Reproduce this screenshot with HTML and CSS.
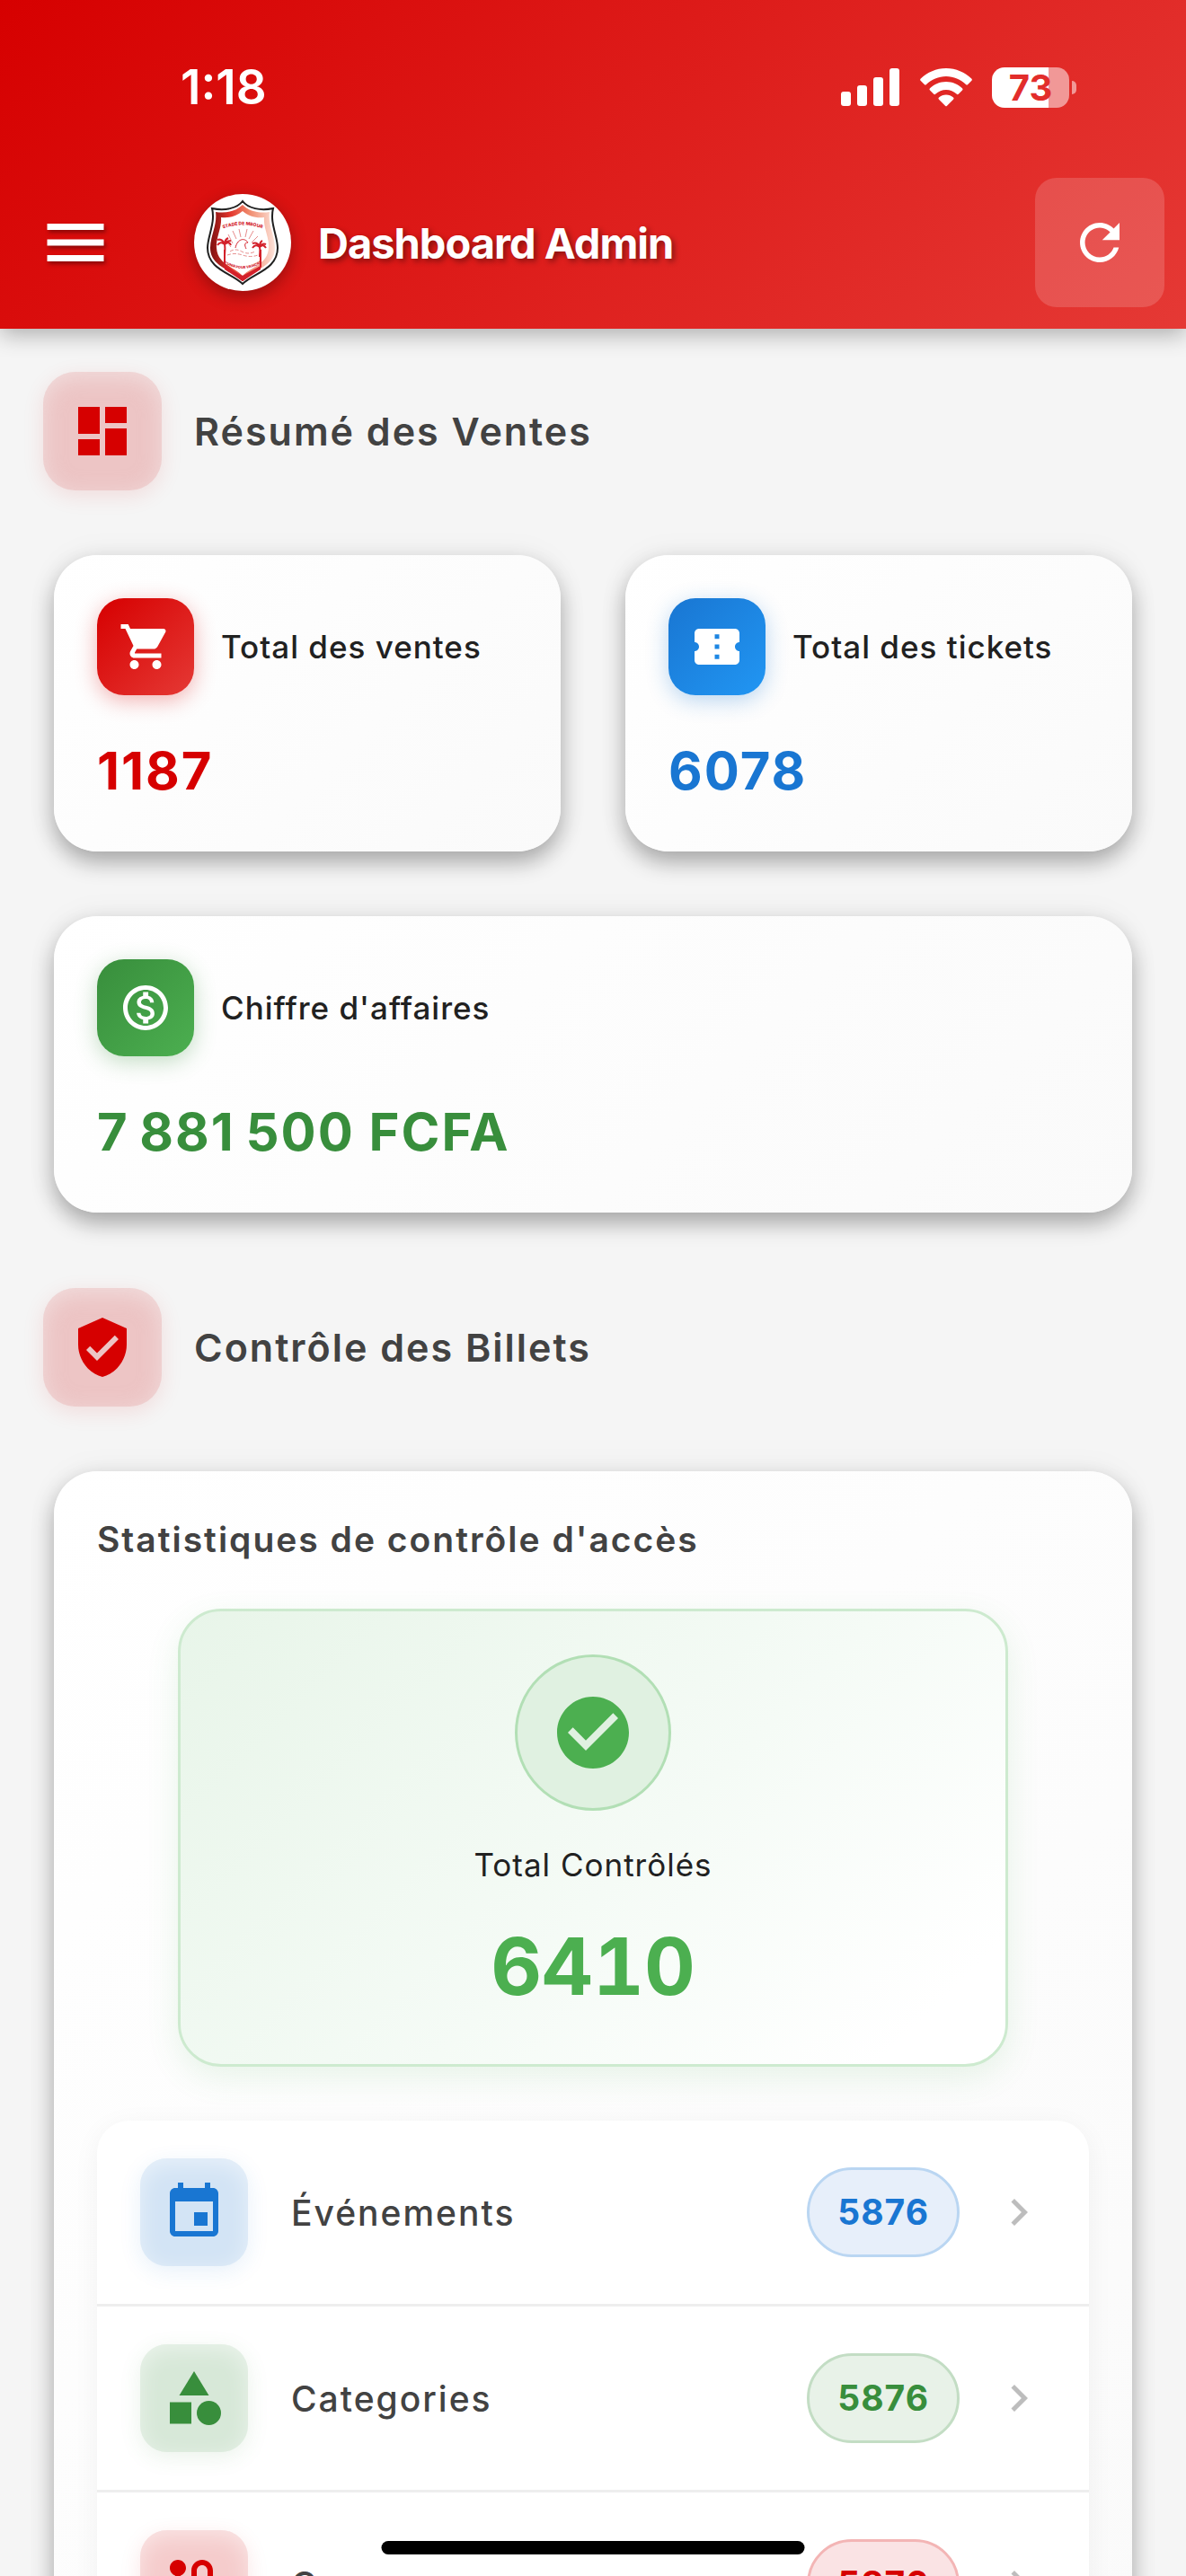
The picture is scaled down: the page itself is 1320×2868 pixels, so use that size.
FILE: index.html
```html
<!DOCTYPE html>
<html lang="fr">
<head>
  <meta charset="UTF-8" />
  <meta name="viewport" content="width=device-width, initial-scale=1.0"/>
  <title>Dashboard Admin</title>
  <link rel="stylesheet" href="styles.css">
</head>
<body>

  <header class="header">
    <!-- Status bar -->
    <div class="status-bar">
      <span class="time">1:18</span>
      <div class="status-icons">
        <svg class="signal" viewBox="0 0 66 42" fill="#fff">
          <rect x="0" y="26" width="11" height="16" rx="3"/>
          <rect x="18" y="19" width="11" height="23" rx="3"/>
          <rect x="36" y="10" width="11" height="32" rx="3"/>
          <rect x="54" y="0" width="11" height="42" rx="3"/>
        </svg>
        <svg class="wifi" viewBox="0 0 58 43" fill="#fff">
          <path d="M29 0C18 0 8 4.500 0.800 11.600q-1.300 1.200 0 2.500l4 4q1 1 2.200 0C12.800 12.500 20.500 9 29 9s16.200 3.500 22 9.100q1.200 1 2.200 0l4-4q1.300-1.300 0-2.500C50 4.500 40 0 29 0z"/>
          <path d="M29 15c-7 0-13.300 2.800-18 7.200q-1.200 1.200 0 2.400l4 4q1.200 1.100 2.400 0C20.500 25.800 24.500 24 29 24s8.500 1.800 11.600 4.600q1.200 1.100 2.400 0l4-4q1.200-1.200 0-2.400C42.300 17.800 36 15 29 15z"/>
          <path d="M29 29.500c-3 0-5.800 1.200-8 3q-1.300 1.100 0 2.300l7 7q1 1 2 0l7-7q1.300-1.200 0-2.300c-2.200-1.800-5-3-8-3z"/>
        </svg>
        <div class="battery"><span>73</span></div>
      </div>
    </div>

    <!-- App bar -->
    <div class="app-bar">
      <button class="menu-btn" aria-label="Menu">
        <svg viewBox="0 0 24 24"><path d="M3 18h18v-2H3v2zm0-5h18v-2H3v2zm0-7v2h18V6H3z"/></svg>
      </button>
      <div class="logo">
        <svg viewBox="0 0 108 108">
          <defs>
            <linearGradient id="crest" x1="0" x2="1" y1="0" y2="0">
              <stop offset="0" stop-color="#7d1010"/>
              <stop offset="0.3" stop-color="#e2332b"/>
              <stop offset="0.6" stop-color="#f08a6c"/>
              <stop offset="1" stop-color="#fde3da"/>
            </linearGradient>
            <path id="arcTop" d="M22 43 Q54 26 86 43"/>
            <path id="arcBottom" d="M26 72 Q54 94 82 72"/>
          </defs>
          <path d="M54 8C48 16 34 19 20 16c4 16-5 31-5 44 0 24 27 28 39 40 12-12 39-16 39-40 0-13-9-28-5-44-14 3-28 0-34-8z" fill="#fff" stroke="#202020" stroke-width="2"/>
          <path d="M54 12C47 19 36 22 24 20c2 14-6 27-6 40 0 21 25 25 36 36 11-11 36-15 36-36 0-13-8-26-6-40-12 2-23-1-30-8z" fill="url(#crest)"/>
          <path d="M54 19c-7 6-15 8-24 7 1 12-6 23-5 34 1 18 19 21 29 31 10-10 28-13 29-31 1-11-6-22-5-34-9 1-17-1-24-7z" fill="#fff"/>
          <path d="M34 62v19l20 15 20-15V62" fill="none" stroke="#d3202a" stroke-width="2"/>
          <path d="M34 80l20 11 20-11v4l-20 13-20-13z" fill="#d3202a"/>
          <g stroke="#d3202a" stroke-width="2" fill="none">
            <path d="M34 70c0-6 1-9 0-14M34 56c-3-3-6-2-8 1M34 56c-2-5-5-6-8-5M34 56c0-4 2-6 4-7M34 56c3-3 6-2 7 1M34 56c2-4 5-4 7-4"/>
            <path d="M73 70c0-5 1-7 0-11M73 59c-3-3-6-2-8 1M73 59c-2-5-5-5-8-4M73 59c0-4 1-6 3-7M73 59c3-3 5-2 7 1M73 59c2-4 5-4 7-3"/>
          </g>
          <g stroke="#e78c8c" stroke-width="1" fill="none">
            <path d="M43 55l-5-10M47 50l-4-9M52 48l-2-9M57 48l2-9M61 50l5-9M64 54l7-7M41 59l-3-4"/>
            <path d="M40 64q6-4 13 0t15 0M37 68q8-3 17 0t17 0" stroke-dasharray="4 2"/>
            <path d="M46 60c2-10 10-12 14-6-4 0-4 3-2 7" stroke="#d3202a"/>
          </g>
          <text class="crest-text"><textPath href="#arcTop" startOffset="50%">STADE DE MBOUR</textPath></text>
          <text class="crest-text crest-motto"><textPath href="#arcBottom" startOffset="50%">S'UNIR POUR VAINCRE</textPath></text>
        </svg>
      </div>
      <h1>Dashboard Admin</h1>
      <button class="refresh-btn" aria-label="Actualiser">
        <svg viewBox="0 0 24 24"><path d="M17.650 6.350C16.200 4.900 14.210 4 12 4c-4.420 0-7.990 3.580-7.990 8s3.570 8 7.990 8c3.730 0 6.840-2.550 7.730-6h-2.080c-.82 2.330-3.040 4-5.650 4-3.310 0-6-2.690-6-6s2.690-6 6-6c1.660 0 3.140.69 4.220 1.780L13 11h7V4l-2.350 2.350z"/></svg>
      </button>
    </div>
  </header>

  <main class="content">
    <!-- Sales summary -->
    <div class="section-title">
      <div class="section-icon">
        <svg viewBox="0 0 24 24"><path d="M3 13h8V3H3v10zm0 8h8v-6H3v6zm10 0h8V11h-8v10zm0-18v6h8V3h-8z"/></svg>
      </div>
      <h2>Résumé des Ventes</h2>
    </div>

    <div class="stats">
      <div class="card stat-card red">
        <div class="stat-head">
          <div class="stat-icon">
            <svg viewBox="0 0 24 24"><path d="M7 18c-1.100 0-1.990.9-1.990 2S5.900 22 7 22s2-.9 2-2-.9-2-2-2zM1 2v2h2l3.600 7.590-1.350 2.450c-.16.28-.25.61-.25.96 0 1.100.9 2 2 2h12v-2H7.420c-.14 0-.25-.11-.25-.25l.03-.12.900-1.630h7.450c.75 0 1.410-.41 1.750-1.030l3.580-6.490c.08-.14.12-.31.12-.48 0-.55-.45-1-1-1H5.210l-.94-2H1zm16 16c-1.100 0-1.990.9-1.990 2s.89 2 1.990 2 2-.9 2-2-.9-2-2-2z"/></svg>
          </div>
          <span>Total des ventes</span>
        </div>
        <strong>1187</strong>
      </div>

      <div class="card stat-card blue">
        <div class="stat-head">
          <div class="stat-icon">
            <svg viewBox="0 0 24 24"><path d="M22 10V6c0-1.110-.9-2-2-2H4c-1.100 0-1.990.89-1.990 2v4c1.100 0 1.990.9 1.990 2s-.89 2-2 2v4c0 1.100.9 2 2 2h16c1.100 0 2-.9 2-2v-4c-1.100 0-2-.9-2-2s.9-2 2-2zm-9 7.500h-2v-2h2v2zm0-4.500h-2v-2h2v2zm0-4.500h-2v-2h2v2z"/></svg>
          </div>
          <span>Total des tickets</span>
        </div>
        <strong>6078</strong>
      </div>

      <div class="card stat-card green wide">
        <div class="stat-head">
          <div class="stat-icon">
            <svg viewBox="0 0 24 24"><path d="M12 2C6.480 2 2 6.480 2 12s4.480 10 10 10 10-4.480 10-10S17.520 2 12 2zm0 18c-4.410 0-8-3.590-8-8s3.590-8 8-8 8 3.590 8 8-3.590 8-8 8zm.31-8.860c-1.770-.45-2.340-.94-2.340-1.670 0-.84.79-1.430 2.100-1.430 1.380 0 1.900.66 1.940 1.640h1.710c-.05-1.340-.87-2.570-2.490-2.970V5H10.900v1.690c-1.510.32-2.720 1.300-2.720 2.810 0 1.790 1.490 2.690 3.660 3.210 1.950.46 2.340 1.150 2.340 1.870 0 .53-.39 1.390-2.100 1.390-1.600 0-2.230-.72-2.320-1.640H8.040c.1 1.700 1.360 2.660 2.860 2.970V19h2.340v-1.670c1.520-.29 2.720-1.160 2.730-2.770-.01-2.200-1.900-2.960-3.660-3.420z"/></svg>
          </div>
          <span>Chiffre d'affaires</span>
        </div>
        <strong>7&#8198;881&#8198;500 FCFA</strong>
      </div>
    </div>

    <!-- Ticket control -->
    <div class="section-title">
      <div class="section-icon">
        <svg viewBox="0 0 24 24"><path d="M12 1L3 5v6c0 5.550 3.840 10.740 9 12 5.160-1.260 9-6.450 9-12V5l-9-4zm-2 16l-4-4 1.410-1.410L10 14.170l6.590-6.590L18 9l-8 8z"/></svg>
      </div>
      <h2>Contrôle des Billets</h2>
    </div>

    <div class="card panel">
      <h3>Statistiques de contrôle d'accès</h3>

      <div class="total">
        <div class="total-icon">
          <svg viewBox="0 0 24 24"><path d="M12 2C6.480 2 2 6.480 2 12s4.480 10 10 10 10-4.480 10-10S17.520 2 12 2zm-2 15l-5-5 1.410-1.410L10 14.170l7.590-7.590L19 8l-9 9z"/></svg>
        </div>
        <span>Total Contrôlés</span>
        <strong>6410</strong>
      </div>

      <nav class="list">
        <a href="#evenements" class="row blue">
          <div class="row-icon">
            <svg viewBox="0 0 24 24"><path d="M17 12h-5v5h5v-5zM16 1v2H8V1H6v2H5c-1.110 0-1.990.9-1.990 2L3 19c0 1.100.89 2 2 2h14c1.100 0 2-.9 2-2V5c0-1.100-.9-2-2-2h-1V1h-2zm3 18H5V8h14v11z"/></svg>
          </div>
          <span class="row-label">Événements</span>
          <span class="badge">5876</span>
          <svg class="chevron" viewBox="0 0 24 24"><path d="M10 6L8.590 7.410 13.170 12l-4.580 4.590L10 18l6-6z"/></svg>
        </a>
        <a href="#categories" class="row green">
          <div class="row-icon">
            <svg viewBox="0 0 24 24"><path d="M12 2l-5.500 9h11z"/><circle cx="17.500" cy="17.500" r="4.500"/><path d="M3 13.500h8v8H3z"/></svg>
          </div>
          <span class="row-label">Categories</span>
          <span class="badge">5876</span>
          <svg class="chevron" viewBox="0 0 24 24"><path d="M10 6L8.590 7.410 13.170 12l-4.580 4.590L10 18l6-6z"/></svg>
        </a>
        <a href="#courses" class="row red">
          <div class="row-icon">
            <svg viewBox="0 0 24 24"><path d="M19 15.180V7c0-2.210-1.790-4-4-4s-4 1.790-4 4v10c0 1.100-.9 2-2 2s-2-.9-2-2V8.820C8.160 8.400 9 7.300 9 6c0-1.660-1.340-3-3-3S3 4.340 3 6c0 1.300.84 2.400 2 2.820V17c0 2.210 1.790 4 4 4s4-1.790 4-4V7c0-1.100.9-2 2-2s2 .9 2 2v8.180c-1.160.41-2 1.510-2 2.820 0 1.660 1.340 3 3 3s3-1.340 3-3c0-1.300-.84-2.400-2-2.820z"/></svg>
          </div>
          <span class="row-label">Courses</span>
          <span class="badge">5876</span>
          <svg class="chevron" viewBox="0 0 24 24"><path d="M10 6L8.590 7.410 13.170 12l-4.580 4.590L10 18l6-6z"/></svg>
        </a>
      </nav>
    </div>
  </main>

  <div class="home-indicator"></div>

</body>
</html>
```
FILE: styles.css
```css
:root {
  --red: #d60000;
  --red-light: #e53935;
  --blue: #1976d2;
  --blue-light: #2196f3;
  --green: #388e3c;
  --green-light: #4caf50;
  --background: #f5f5f5;
  --text: #424242;
}

* {
  box-sizing: border-box;
}

body {
  margin: 0;
  height: 100vh;
  overflow: hidden;
  font-family: Inter, "Liberation Sans", sans-serif;
  background-color: var(--background);
  color: var(--text);
}

h1, h2, h3 {
  margin: 0;
}

svg {
  display: block;
  fill: currentColor;
}

button {
  display: flex;
  align-items: center;
  justify-content: center;
  padding: 0;
  border: none;
  background: none;
  color: #fff;
  cursor: pointer;
}

/* Header */
.header {
  position: relative;
  background: linear-gradient(135deg, var(--red), var(--red-light));
  color: #fff;
  padding-bottom: 12px;
  box-shadow: 0 6px 24px rgba(0, 0, 0, 0.3);
}

.status-bar {
  display: flex;
  align-items: center;
  justify-content: space-between;
  height: 186px;
  padding: 8px 130px 0 201px;
}

.time {
  font-size: 53px;
  font-weight: 600;
}

.status-icons {
  display: flex;
  align-items: center;
  gap: 22px;
}

.signal {
  width: 66px;
  height: 42px;
}

.wifi {
  width: 58px;
  height: 43px;
}

.battery {
  position: relative;
  width: 86px;
  height: 45px;
  border-radius: 14px;
  background: linear-gradient(90deg, #fff 73%, #f19897 73%);
  color: #e22d2b;
  font-size: 40px;
  font-weight: 700;
  line-height: 45px;
  text-align: center;
}

.battery::after {
  content: "";
  position: absolute;
  left: 89px;
  top: 15px;
  width: 5px;
  height: 15px;
  border-radius: 0 6px 6px 0;
  background: #f19897;
}

.app-bar {
  display: flex;
  align-items: center;
  height: 168px;
  padding: 0 24px 0 42px;
}

.menu-btn svg {
  width: 84px;
  height: 84px;
  filter: drop-shadow(2px 3px 2px rgba(0, 0, 0, 0.35));
}

.logo {
  width: 108px;
  height: 108px;
  margin-left: 90px;
  border-radius: 50%;
  background: #fff;
  box-shadow: 0 6px 18px rgba(0, 0, 0, 0.3);
}

.crest-text {
  font-size: 5px;
  font-weight: 800;
  fill: #d3202a;
  text-anchor: middle;
}

.crest-motto {
  font-size: 4px;
}

.app-bar h1 {
  flex: 1;
  margin-left: 30px;
  font-size: 47px;
  font-weight: 700;
  letter-spacing: -1px;
  text-shadow: 3px 3px 6px rgba(0, 0, 0, 0.4);
}

.refresh-btn {
  width: 144px;
  height: 144px;
  border-radius: 24px;
  background: rgba(255, 255, 255, 0.16);
}

.refresh-btn svg {
  width: 66px;
  height: 66px;
}

/* Content */
.content {
  padding: 48px 48px 0;
}

.section-title {
  display: flex;
  align-items: center;
  gap: 36px;
}

.section-icon {
  display: flex;
  align-items: center;
  justify-content: center;
  width: 132px;
  height: 132px;
  border-radius: 36px;
  background: #edc5c5;
  color: var(--red);
  box-shadow: 0 6px 24px rgba(214, 0, 0, 0.1), inset 0 6px 24px rgba(245, 245, 245, 0.5);
}

.section-icon svg {
  width: 72px;
  height: 72px;
}

.section-title h2 {
  font-size: 43px;
  font-weight: 600;
  letter-spacing: 2px;
}

.card {
  border-radius: 48px;
  background: linear-gradient(135deg, #fff, #fafafa);
  box-shadow: 0 12px 24px rgba(0, 0, 0, 0.3), 0 0 36px rgba(0, 0, 0, 0.05);
}

.stats {
  display: grid;
  grid-template-columns: 1fr 1fr;
  gap: 72px;
  margin: 72px 12px 84px;
}

.stat-card {
  height: 330px;
  padding: 48px;
}

.wide {
  grid-column: span 2;
}

.stat-head {
  display: flex;
  align-items: center;
  gap: 30px;
  color: #212121;
  font-size: 35px;
  font-weight: 500;
  letter-spacing: 1px;
}

.stat-icon {
  display: flex;
  align-items: center;
  justify-content: center;
  width: 108px;
  height: 108px;
  border-radius: 30px;
  color: #fff;
}

.stat-icon svg {
  width: 60px;
  height: 60px;
}

.red .stat-icon {
  background: linear-gradient(135deg, var(--red), var(--red-light));
  box-shadow: 0 6px 24px rgba(214, 0, 0, 0.3);
}

.blue .stat-icon {
  background: linear-gradient(135deg, var(--blue), var(--blue-light));
  box-shadow: 0 6px 24px rgba(25, 118, 210, 0.3);
}

.green .stat-icon {
  background: linear-gradient(135deg, var(--green), var(--green-light));
  box-shadow: 0 6px 24px rgba(56, 142, 60, 0.3);
}

.stat-card strong {
  display: block;
  margin-top: 48px;
  font-size: 58px;
  font-weight: 700;
  line-height: 72px;
  letter-spacing: 2px;
}

.red strong {
  color: var(--red);
}

.blue strong {
  color: var(--blue);
}

.green strong {
  color: var(--green);
}

/* Access control panel */
.panel {
  margin: 72px 12px 0;
  padding: 48px;
}

.panel h3 {
  font-size: 39px;
  font-weight: 600;
  line-height: 55px;
  letter-spacing: 2px;
}

.total {
  display: flex;
  flex-direction: column;
  align-items: center;
  width: 924px;
  max-width: 100%;
  height: 510px;
  margin: 50px auto 60px;
  padding-top: 48px;
  border: 3px solid #cdeacf;
  border-radius: 48px;
  background: linear-gradient(135deg, #e8f5e9, #f5fbf6 55%, #fff 90%);
  box-shadow: 0 12px 36px rgba(76, 175, 80, 0.12);
}

.total-icon {
  display: flex;
  align-items: center;
  justify-content: center;
  width: 174px;
  height: 174px;
  border: 3px solid #b2dfb5;
  border-radius: 50%;
  background: #e0f1e1;
  color: var(--green-light);
}

.total-icon svg {
  width: 96px;
  height: 96px;
}

.total span {
  margin-top: 36px;
  color: #212121;
  font-size: 35px;
  line-height: 48px;
  letter-spacing: 1px;
}

.total strong {
  margin-top: 36px;
  color: var(--green-light);
  font-size: 88px;
  font-weight: 700;
  font-variant-numeric: tabular-nums;
  line-height: 106px;
}

.list {
  overflow: hidden;
  border-radius: 36px;
  background: #fff;
  box-shadow: 0 6px 30px rgba(0, 0, 0, 0.05);
}

.row {
  display: flex;
  align-items: center;
  padding: 42px 48px;
  border-bottom: 3px solid #eee;
  color: inherit;
  text-decoration: none;
}

.row:last-child {
  border-bottom: none;
}

.row-icon {
  display: flex;
  align-items: center;
  justify-content: center;
  width: 120px;
  height: 120px;
  border-radius: 30px;
}

.row-icon svg {
  width: 72px;
  height: 72px;
}

.row-label {
  flex: 1;
  margin-left: 48px;
  font-size: 39px;
  font-weight: 500;
  letter-spacing: 2px;
}

.badge {
  padding: 0 31px;
  border: 3px solid;
  border-radius: 50px;
  font-size: 39px;
  font-weight: 700;
  line-height: 94px;
  letter-spacing: 1px;
}

.blue .row-icon {
  background: #d3e4f5;
  color: var(--blue);
  box-shadow: 0 6px 24px rgba(25, 118, 210, 0.1), inset 0 6px 24px rgba(255, 255, 255, 0.5);
}

.green .row-icon {
  background: #d7e8d8;
  color: var(--green);
  box-shadow: 0 6px 24px rgba(56, 142, 60, 0.1), inset 0 6px 24px rgba(255, 255, 255, 0.5);
}

.red .row-icon {
  background: #f5cccc;
  color: var(--red);
  box-shadow: 0 6px 24px rgba(214, 0, 0, 0.1), inset 0 6px 24px rgba(255, 255, 255, 0.5);
}

.blue .badge {
  border-color: #bad6f2;
  background: #e7effa;
  color: var(--blue);
}

.green .badge {
  border-color: #c3ddc4;
  background: #e8f2e8;
  color: var(--green);
}

.red .badge {
  border-color: #f3b5b5;
  background: #fae3e4;
  color: var(--red);
}

.chevron {
  width: 60px;
  height: 60px;
  margin-left: 36px;
  color: #bdbdbd;
}

.home-indicator {
  position: fixed;
  left: 50%;
  bottom: 24px;
  width: 471px;
  height: 15px;
  border-radius: 8px;
  background: #000;
  transform: translateX(-50%);
}
```
